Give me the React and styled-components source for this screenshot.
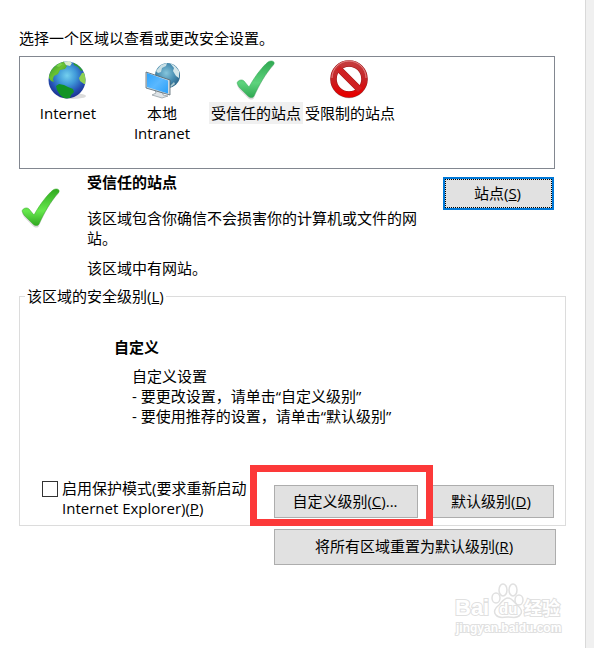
import { useState } from "react";
import styled, { createGlobalStyle } from "styled-components";

const GlobalStyle = createGlobalStyle`
  * {
    box-sizing: border-box;
  }
  body {
    margin: 0;
    background: #f0f0f0;
    color: #000;
    font-family: "Open Sans", "Noto Sans CJK SC", sans-serif;
    font-size: 15px;
    line-height: 20px;
  }
  button, input {
    font: inherit;
    color: inherit;
  }
`;

const Page = styled.main`
  position: relative;
  min-height: 100vh;
  margin-right: 8px;
  padding: 28px 19px 0;
  border-right: 1px solid #d9d9d9;
  background: #fff;
`;

const Text = styled.p`
  margin: 0;
`;

const ZoneList = styled.div`
  display: flex;
  height: 113px;
  margin: 8px 11px 0 0;
  padding: 3px 1px;
  border: 1px solid #828790;
`;

const Zone = styled.button`
  display: flex;
  flex-direction: column;
  align-items: center;
  width: 94px;
  padding: 0;
  border: 0;
  background: none;
`;

const ZoneLabel = styled.span`
  margin-top: 2px;
  padding: 1px 2px;
  background: ${(props) => (props.$selected ? "#f0f0f0" : "none")};
  white-space: pre-line;
`;

const Detail = styled.section`
  display: flex;
  align-items: flex-start;
  margin: 3px 12px 8px 0;
`;

const DetailIcon = styled.div`
  width: 68px;
  padding: 16px 0 0 2px;
`;

const DetailText = styled.div`
  display: flex;
  flex: 1;
  flex-direction: column;
  gap: 10px;
  padding-right: 24px;
`;

const Heading = styled.h2`
  margin: 0;
  font-size: 15px;
  font-weight: 700;
`;

const DetailHeading = styled(Heading)`
  margin-bottom: 6px;
`;

const Button = styled.button`
  width: ${(props) => props.$width};
  height: ${(props) => (props.$tall ? "36px" : "33px")};
  padding: 0 2px 2px 0;
  border: 1px solid #adadad;
  background: #e1e1e1;
`;

const FocusedButton = styled(Button)`
  margin-top: 5px;
  border: 2px solid #0078d7;
  outline: 1px dotted #000;
  outline-offset: -3px;
`;

const Level = styled.fieldset`
  min-width: 0;
  margin: 0;
  padding: 31px 11px 7px 22px;
  border: 1px solid #dcdcdc;

  legend {
    margin-left: -17px;
    padding: 0 2px;
  }
`;

const LevelText = styled.div`
  padding-left: 72px;
`;

const LevelList = styled.div`
  padding: 9px 0 0 18px;
`;

const Actions = styled.div`
  display: flex;
  align-items: flex-end;
  margin-top: 52px;
`;

const Protect = styled.label`
  display: flex;
  flex: 1;
  gap: 4px;
  white-space: nowrap;
`;

const CheckBox = styled.input`
  appearance: none;
  width: 16px;
  height: 16px;
  margin: 3px 0 0;
  border: 1px solid #333;
  background: #fff;

  &:checked {
    background: #333;
    box-shadow: inset 0 0 0 3px #fff;
  }
`;

const Highlight = styled.div`
  position: relative;
  margin-right: 12px;

  &::after {
    content: "";
    position: absolute;
    inset: -20px -15px -8px -24px;
    border: 7px solid #fc3939;
    pointer-events: none;
  }
`;

const Reset = styled.div`
  display: flex;
  justify-content: flex-end;
  padding: 3px 10px 0 0;
`;

const Watermark = styled.svg`
  position: absolute;
  right: 20px;
  bottom: 8px;
  pointer-events: none;

  text {
    fill: #fff;
    stroke: #e0e0e0;
    stroke-width: 2px;
    paint-order: stroke;
    font-family: "Liberation Sans", "Noto Sans CJK SC", sans-serif;
    font-weight: 700;
  }
`;

const Globe = () => (
  <svg width="40" height="40" viewBox="0 0 40 40">
    <defs>
      <radialGradient id="sea" cx="50%" cy="38%" r="62%">
        <stop offset="0" stopColor="#74d0ee" />
        <stop offset=".4" stopColor="#3f98d8" />
        <stop offset=".75" stopColor="#2450b4" />
        <stop offset="1" stopColor="#1c2f8c" />
      </radialGradient>
      <linearGradient id="land" x1="0" y1="0" x2="1" y2="1">
        <stop offset="0" stopColor="#1f8d2c" />
        <stop offset=".5" stopColor="#6cc233" />
        <stop offset="1" stopColor="#17802c" />
      </linearGradient>
      <clipPath id="globe-clip">
        <circle cx="19" cy="20" r="18.5" />
      </clipPath>
    </defs>
    <ellipse cx="24" cy="36" rx="14" ry="3" fill="#999" opacity=".35" />
    <circle cx="19" cy="20" r="18.5" fill="url(#sea)" />
    <g clipPath="url(#globe-clip)">
      <path d="M0 15 4 6l7-5h5l1 3 2 2-2 3-5 1-2 4-4 2-1 3 1 3-3-1-2-3z" fill="url(#land)" />
      <path d="m8 26 3-2 5 1 4 2 5 2 1 3-3 3-1 3-5 1-5-4-3-5z" fill="#129325" />
      <path d="m31 18 3-5 5-1v12l-3 0-4-3z" fill="#8ed052" />
      <path d="m25 2 6 1 5 7-3 1-3-4-4-2z" fill="#2c9c32" />
    </g>
    <path d="m16 2 5-1 3 2-2 3-4-1z" fill="#d9edc9" />
    <path d="m8 6 4-3 3 1-4 3z" fill="#7bd34d" />
  </svg>
);

const Intranet = () => (
  <svg width="40" height="40" viewBox="0 0 40 40">
    <defs>
      <radialGradient id="small-globe" cx="45%" cy="40%" r="60%">
        <stop offset="0" stopColor="#86c6dd" />
        <stop offset=".6" stopColor="#478cb0" />
        <stop offset="1" stopColor="#2d678c" />
      </radialGradient>
      <linearGradient id="screen" x1="0" y1="0" x2="1" y2="1">
        <stop offset="0" stopColor="#2ea3fb" />
        <stop offset=".5" stopColor="#5ab8ff" />
        <stop offset="1" stopColor="#2a9ff8" />
      </linearGradient>
    </defs>
    <circle cx="25.5" cy="15.5" r="12.5" fill="url(#small-globe)" />
    <path d="m14 11 5-6 6-2-1 3-4 2-1 4-3 1z" fill="#c9dfe4" />
    <path d="m28 3 5 3 4 5v7l-3-2-3-5 1-3z" fill="#d5e7ea" />
    <path d="m28 26 4-4 1 2-4 3z" fill="#a9c9cf" />
    <path d="m13 30 8 3v2l5 1-6 2-10-3 4-2z" fill="#dfe4e7" stroke="#8b979e" strokeWidth=".7" />
    <path d="m4 12 24 8v15L4 28z" fill="#cfdbe1" stroke="#54656f" strokeWidth=".8" />
    <path d="m5 13 21 7.5v13L5 27z" fill="url(#screen)" />
  </svg>
);

const Check = ({ id, light, dark }) => (
  <svg width="40" height="40" viewBox="0 0 40 40">
    <defs>
      <linearGradient id={id} x1="0" y1="0" x2="0" y2="1">
        <stop offset="0" stopColor={dark} />
        <stop offset=".6" stopColor={light} />
        <stop offset="1" stopColor={dark} />
      </linearGradient>
    </defs>
    <path
      d="M1 24c1-3 5-4 7-2l5 6C19 17 27 7 32 2c3-2 7-1 6 2-9 10-15 21-20 33-1 2-4 2-6 0L3 28z"
      fill="#777"
      opacity=".3"
      transform="translate(0 1)"
    />
    <path
      d="M1 23c1-3 5-4 7-2l5 6C19 16 27 6 32 2c3-2 7-1 6 2-9 10-15 21-20 32-1 2-4 2-6 0L3 27z"
      fill={`url(#${id})`}
      stroke={dark}
      strokeWidth=".5"
    />
  </svg>
);

const Forbidden = () => (
  <svg width="40" height="40" viewBox="0 0 40 40">
    <defs>
      <linearGradient id="red" x1="0" y1="0" x2="0" y2="1">
        <stop offset="0" stopColor="#c53a3b" />
        <stop offset=".5" stopColor="#c52326" />
        <stop offset="1" stopColor="#e50000" />
      </linearGradient>
    </defs>
    <circle cx="19" cy="20" r="16" fill="none" stroke="#888" strokeWidth="5" opacity=".3" />
    <g fill="none" stroke="#9b1618" strokeWidth="6.5">
      <circle cx="19" cy="19" r="15.5" />
      <path d="m8 8 22 22" />
    </g>
    <circle cx="19" cy="19" r="15.5" fill="none" stroke="url(#red)" strokeWidth="5.5" />
    <path d="m8 8 22 22" stroke="#cf2022" strokeWidth="5.5" />
    <path d="M2 18A17 17 0 0 1 36 18" fill="none" stroke="#ee9b9b" strokeWidth=".8" />
  </svg>
);

const zones = [
  { id: "internet", label: "Internet", icon: <Globe /> },
  { id: "intranet", label: "本地\nIntranet", icon: <Intranet /> },
  {
    id: "trusted",
    label: "受信任的站点",
    icon: <Check id="check-zone" light="#5ed37d" dark="#30a852" />,
  },
  { id: "restricted", label: "受限制的站点", icon: <Forbidden /> },
];

const App = () => {
  const [zone, setZone] = useState("trusted");
  const [isProtected, setIsProtected] = useState(false);

  return (
    <>
      <GlobalStyle />
      <Page>
        <Text>选择一个区域以查看或更改安全设置。</Text>
        <ZoneList>
          {zones.map((item) => (
            <Zone
              key={item.id}
              type="button"
              aria-pressed={zone === item.id}
              onClick={() => setZone(item.id)}
            >
              {item.icon}
              <ZoneLabel $selected={zone === item.id}>{item.label}</ZoneLabel>
            </Zone>
          ))}
        </ZoneList>

        <Detail>
          <DetailIcon>
            <Check id="check-detail" light="#66e84d" dark="#30a820" />
          </DetailIcon>
          <DetailText>
            <DetailHeading>受信任的站点</DetailHeading>
            <Text>该区域包含你确信不会损害你的计算机或文件的网站。</Text>
            <Text>该区域中有网站。</Text>
          </DetailText>
          <FocusedButton type="button" $width="111px">
            站点(<u>S</u>)
          </FocusedButton>
        </Detail>

        <Level>
          <legend>
            该区域的安全级别(<u>L</u>)
          </legend>
          <LevelText>
            <Heading>自定义</Heading>
            <LevelList>
              <Text>自定义设置</Text>
              <Text>- 要更改设置，请单击“自定义级别”</Text>
              <Text>- 要使用推荐的设置，请单击“默认级别”</Text>
            </LevelList>
          </LevelText>
          <Actions>
            <Protect>
              <CheckBox
                type="checkbox"
                checked={isProtected}
                onChange={(e) => setIsProtected(e.target.checked)}
              />
              <span>
                启用保护模式(要求重新启动
                <br />
                Internet Explorer)(<u>P</u>)
              </span>
            </Protect>
            <Highlight>
              <Button type="button" $width="144px">
                自定义级别(<u>C</u>)...
              </Button>
            </Highlight>
            <Button type="button" $width="124px">
              默认级别(<u>D</u>)
            </Button>
          </Actions>
        </Level>

        <Reset>
          <Button type="button" $width="282px" $tall>
            将所有区域重置为默认级别(<u>R</u>)
          </Button>
        </Reset>

        <Watermark width="112" height="64" viewBox="0 -8 112 64">
          <text x="2" y="31" fontSize="22">Bai</text>
          <g fill="#fff" stroke="#e0e0e0" strokeWidth="1.5">
            <ellipse cx="43" cy="14" rx="4" ry="5" />
            <ellipse cx="50" cy="6" rx="4" ry="6" />
            <ellipse cx="60" cy="6" rx="4" ry="6" />
            <ellipse cx="66" cy="16" rx="4" ry="5" />
            <path d="M55 14c4 0 6 4 9 7 4 3 6 7 3 10-3 4-7 2-12 2s-9 2-12-2c-3-3-1-7 3-10 3-3 5-7 9-7z" />
          </g>
          <text x="46" y="30" fontSize="15">du</text>
          <text x="71" y="31" fontSize="18">经验</text>
          <text x="3" y="48" fontSize="12">jingyan.baidu.com</text>
        </Watermark>
      </Page>
    </>
  );
};

export default App;
